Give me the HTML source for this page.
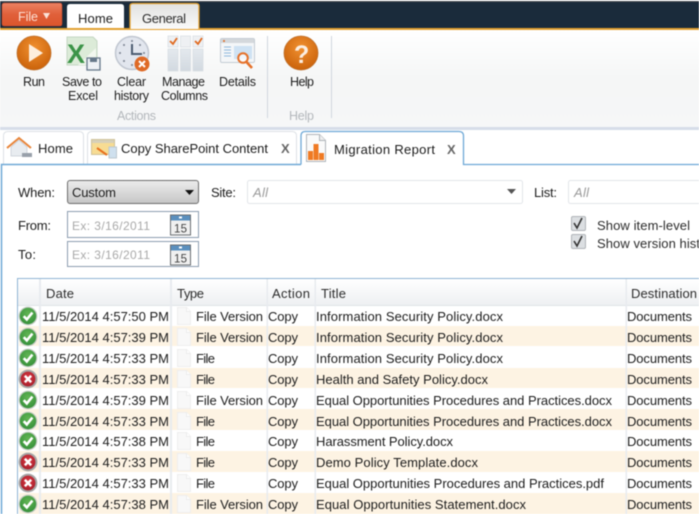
<!DOCTYPE html>
<html><head><meta charset="utf-8"><title>Migration Report</title>
<style>
html,body{margin:0;padding:0;width:699px;height:514px;overflow:hidden;background:#fff}
svg{display:block;filter:blur(.4px)}
text{font-family:"Liberation Sans",sans-serif;font-size:13px;fill:#1c1c1c}
.s{font-size:12.5px}
.g{fill:#a9a9a9;font-size:12px}
.h{fill:#2c2c2c}
</style></head><body>
<svg width="699" height="514" viewBox="0 0 699 514" xmlns="http://www.w3.org/2000/svg">
<defs>
<linearGradient id="rib" x1="0" y1="0" x2="0" y2="1"><stop offset="0" stop-color="#fff"/><stop offset=".5" stop-color="#f5f6f6"/><stop offset="1" stop-color="#f6f7f8"/></linearGradient>
<linearGradient id="file" x1="0" y1="0" x2="0" y2="1"><stop offset="0" stop-color="#ec8263"/><stop offset=".5" stop-color="#e0603a"/><stop offset="1" stop-color="#dc552c"/></linearGradient>
<linearGradient id="gen" x1="0" y1="0" x2="0" y2="1"><stop offset="0" stop-color="#e2e2e0"/><stop offset="1" stop-color="#fafafa"/></linearGradient>
<radialGradient id="org" cx=".5" cy=".35" r=".7"><stop offset="0" stop-color="#f09030"/><stop offset="1" stop-color="#c85f08"/></radialGradient>
<linearGradient id="dd" x1="0" y1="0" x2="0" y2="1"><stop offset="0" stop-color="#ececec"/><stop offset="1" stop-color="#c6c6c6"/></linearGradient>
<linearGradient id="hd" x1="0" y1="0" x2="0" y2="1"><stop offset="0" stop-color="#fff"/><stop offset="1" stop-color="#eef0f2"/></linearGradient>
<linearGradient id="col" x1="0" y1="0" x2="0" y2="1"><stop offset="0" stop-color="#e4e9ee"/><stop offset="1" stop-color="#d2d9e0"/></linearGradient>
<radialGradient id="grn" cx=".5" cy=".35" r=".7"><stop offset="0" stop-color="#62b554"/><stop offset="1" stop-color="#328e38"/></radialGradient>
<radialGradient id="red" cx=".5" cy=".4" r=".6"><stop offset="0" stop-color="#dc3a44"/><stop offset="1" stop-color="#a81e2a"/></radialGradient>
<g id="ok"><circle cx="0" cy="0" r="9.4" fill="#c3cbc3"/><circle cx="0" cy="0" r="8.2" fill="url(#grn)"/><path d="M-4.300 .2L-1.200 3.400L4.400-3.400" fill="none" stroke="#fff" stroke-width="2.600"/></g>
<g id="er"><circle cx="0" cy="0" r="9.4" fill="#a5a5a5"/><circle cx="0" cy="0" r="7.4" fill="url(#red)"/><path d="M-3.200-3.200L3.200 3.200M3.200-3.200L-3.200 3.200" stroke="#fff" stroke-width="2.500"/></g>
<g id="doc"><path d="M.5.5H9.500L13.500 4.500V17.500H.5Z" fill="#f8f8f8" stroke="#eeeeee"/><path d="M9.500.5V4.500H13.500" fill="#fff" stroke="#ececec"/></g>
<g id="cal"><rect x=".5" y=".5" width="20" height="20" fill="#f0f0f0" stroke="#6a6e72"/><rect x="1" y="1" width="19" height="5" fill="#5a8fbe"/><rect x="9" y="2" width="3" height="2" fill="#fff"/><text x="4" y="18" style="font-size:11.500px;fill:#444" textLength="13">15</text></g>
</defs>

<!-- Ribbon header -->
<rect width="699" height="1" fill="#fff"/>
<rect y="1" width="699" height="1" fill="#4a4f55"/>
<rect y="2" width="699" height="26" fill="#1a2b3b"/>
<rect y="28" width="699" height="2" fill="#e3a02f"/>
<rect y="30" width="699" height="97" fill="url(#rib)"/>
<rect y="127" width="699" height="3" fill="#d6dde9"/>

<rect x="2" y="3" width="60" height="23" rx="2" fill="url(#file)" stroke="#c8492a" stroke-width=".5"/>
<text x="18" y="21" textLength="20" style="font-size:12.500px;fill:#fde0d4">File</text>
<path d="M43 13H50L46.500 19Z" fill="#fbe2d8"/>

<path d="M67 28V7Q67 4 70 4H121Q124 4 124 7V28Z" fill="#fff"/>
<text x="78" y="23" textLength="35">Home</text>
<path d="M130 29V6Q130 3.500 133 3.500H196Q199 3.500 199 6V29" fill="url(#gen)" stroke="#e3a02f" stroke-width="1.300"/>
<text x="142" y="23" textLength="44" class="h">General</text>

<!-- Run -->
<circle cx="34" cy="53" r="17" fill="url(#org)" stroke="#bd6f2c" stroke-width=".8"/>
<path d="M29 44L43 53L29 62Z" fill="#fdeedd"/>
<!-- Excel -->
<path d="M67 37H93L97 41V65H67Z" fill="#dcebd8" stroke="#c4d6c2"/>
<path d="M78 65L96 48V65Z" fill="#f2f7ef"/>
<text x="67" y="63" style="font-size:27px;font-weight:bold;fill:#3c9448" textLength="21">X</text>
<rect x="87" y="58" width="13" height="12" fill="#eef2f6" stroke="#66788a" stroke-width="1.300"/>
<rect x="90" y="58" width="7" height="4" fill="#66788a"/>
<!-- Clock -->
<circle cx="132" cy="53" r="16.500" fill="#e2e6ee" stroke="#c0c6d0" stroke-width="1.500"/>
<g fill="#7a828e"><circle cx="132" cy="41" r="1"/><circle cx="120" cy="53" r="1"/><circle cx="144" cy="53" r="1"/><circle cx="132" cy="65" r="1"/><circle cx="124" cy="45" r="1"/><circle cx="140" cy="45" r="1"/><circle cx="124" cy="61" r="1"/></g>
<path d="M132 44V54H142" fill="none" stroke="#4c5c70" stroke-width="2"/>
<circle cx="142" cy="64" r="7.500" fill="#df6a26"/>
<path d="M139 61L145 67M145 61L139 67" stroke="#fff" stroke-width="2"/>
<!-- Manage columns -->
<g stroke="#d6dce2" stroke-width=".7">
<rect x="168" y="36" width="10" height="11" fill="#eef0f3"/><rect x="180.500" y="36" width="10" height="11" fill="#eef0f3"/><rect x="193" y="36" width="10" height="11" fill="#eef0f3"/>
<rect x="168" y="49" width="10" height="22" fill="url(#col)"/><rect x="180.500" y="49" width="10" height="22" fill="url(#col)"/><rect x="193" y="49" width="10" height="22" fill="url(#col)"/>
</g>
<path d="M170 41L173 44L177 38M195 41L198 44L202 38" fill="none" stroke="#e06a20" stroke-width="1.800"/>
<!-- Details -->
<rect x="220.500" y="38.500" width="34" height="24" rx="1.500" fill="#f4f6f8" stroke="#c4ccd4"/>
<rect x="221" y="39" width="33" height="4" fill="#d4d8dc"/>
<circle cx="224" cy="41" r="1" fill="#e06a20"/>
<path d="M224 47H231M224 50H231M224 53H231M224 56H231" stroke="#8fb8dc"/>
<rect x="234" y="46" width="18" height="13" fill="#cfe2f3"/>
<circle cx="243" cy="58" r="4.800" fill="#fff" fill-opacity=".7" stroke="#e5712a" stroke-width="2"/>
<path d="M246.500 62L252 68" stroke="#e5712a" stroke-width="2.600"/>
<!-- Help -->
<circle cx="301" cy="53" r="17" fill="url(#org)" stroke="#bd6f2c" stroke-width=".8"/>
<text x="294" y="63" style="font-size:25px;font-weight:bold;fill:#fbeee2" textLength="14">?</text>

<rect x="267" y="36" width="1" height="82" fill="#d0d6de"/>
<rect x="331" y="36" width="1" height="82" fill="#d0d6de"/>

<g class="l">
<text class="s" x="23" y="86" textLength="22">Run</text>
<text class="s" x="62" y="86" textLength="40">Save to</text>
<text class="s" x="68" y="100" textLength="30">Excel</text>
<text class="s" x="117" y="86" textLength="29">Clear</text>
<text class="s" x="114" y="100" textLength="35">history</text>
<text class="s" x="162" y="86" textLength="43">Manage</text>
<text class="s" x="161" y="100" textLength="47">Columns</text>
<text class="s" x="219" y="86" textLength="37">Details</text>
<text class="s" x="290" y="86" textLength="24">Help</text>
<text class="s" x="117" y="120" textLength="39" style="fill:#b3b7bb">Actions</text>
<text class="s" x="289" y="120" textLength="25" style="fill:#b3b7bb">Help</text>
</g>

<!-- Doc tabs -->
<path d="M3.500 164V136Q3.500 131.500 8 131.500H79Q83.500 131.500 83.500 136V164" fill="#fff" stroke="#dde1e6"/>
<path d="M87.500 164V136Q87.500 131.500 92 131.500H292Q296.500 131.500 296.500 136V164" fill="#fff" stroke="#dde1e6"/>
<path d="M1.500 514V164.500H301" fill="none" stroke="#6ea8d6" stroke-width="1.500"/>
<path d="M301 164.500V136Q301 131.500 305 131.500H459Q463.500 131.500 463.500 136V164.500H699" fill="#fff" stroke="#6ea8d6" stroke-width="1.300"/>

<!-- Home tab icon -->
<path d="M11 147V156H27V147L19 140Z" fill="#e8ecf0" stroke="#c4cad2" stroke-width=".7"/>
<path d="M7 148L19 138L31 148" fill="none" stroke="#e8853a" stroke-width="2"/>
<rect x="22" y="153" width="10" height="4" fill="#98a0aa"/>
<text x="38" y="153" textLength="35">Home</text>
<!-- Copy tab icon -->
<rect x="91.500" y="139.500" width="23" height="15" fill="#f7dc93" stroke="#d0c298"/>
<rect x="92" y="140" width="22" height="3" fill="#d6d0ba"/>
<rect x="109" y="147" width="7.500" height="11" fill="#cfe0ee" stroke="#bcc8d0"/>
<path d="M97 148L107 155" stroke="#e8701e" stroke-width="2"/>
<text x="121" y="153" textLength="147">Copy SharePoint Content</text>
<text x="281" y="153" textLength="9" style="font-weight:bold;fill:#666">X</text>
<!-- Report tab icon -->
<path d="M306.500 134.500H319.500L325.500 140.500V161.500H306.500Z" fill="#fafafa" stroke="#b0b5ba"/>
<path d="M319.500 134.500V140.500H325.500" fill="#eee" stroke="#b0b5ba"/>
<rect x="308" y="151" width="5" height="9" fill="#ef7a24"/><rect x="313.500" y="144" width="5" height="16" fill="#ef7a24"/><rect x="319" y="153" width="5" height="7" fill="#ef7a24"/>
<text x="334" y="154" textLength="101">Migration Report</text>
<text x="447" y="154" textLength="9" style="font-weight:bold;fill:#666">X</text>

<!-- Filters -->
<text x="18" y="197" textLength="37">When:</text>
<rect x="67.500" y="180.500" width="131" height="23" rx="2.500" fill="url(#dd)" stroke="#6c6c6c"/>
<text x="72" y="197" textLength="44">Custom</text>
<path d="M185 190H194L189.500 195Z" fill="#111"/>
<text x="211" y="197" textLength="25">Site:</text>
<rect x="247.500" y="180.500" width="275" height="23" rx="2" fill="#fff" stroke="#e2e5e9"/>
<text x="253" y="197" textLength="15" style="font-style:italic;fill:#9a9a9a">All</text>
<path d="M507 189H516L511.500 194Z" fill="#555"/>
<text x="534" y="197" textLength="23">List:</text>
<rect x="568.500" y="180.500" width="140" height="23" rx="2" fill="#fff" stroke="#e2e5e9"/>
<text x="574" y="197" textLength="15" style="font-style:italic;fill:#9a9a9a">All</text>

<text x="18" y="230" textLength="33">From:</text>
<rect x="67.500" y="211.500" width="131" height="26" fill="#fff" stroke="#8d9db0"/>
<text class="g" x="72" y="230" textLength="78">Ex: 3/16/2011</text>
<use href="#cal" x="170" y="214.500"/>
<text x="18" y="259" textLength="18">To:</text>
<rect x="67.500" y="241.500" width="131" height="25" fill="#fff" stroke="#8d9db0"/>
<text class="g" x="72" y="259" textLength="78">Ex: 3/16/2011</text>
<use href="#cal" x="170" y="244.500"/>

<g>
<rect x="571.500" y="216.500" width="14" height="14" rx="1.500" fill="#dcdfe2" stroke="#b0b4b8"/>
<path d="M574 223L577 228L582 218" fill="none" stroke="#333" stroke-width="1.600"/>
<rect x="571.500" y="234.500" width="14" height="14" rx="1.500" fill="#dcdfe2" stroke="#b0b4b8"/>
<path d="M574 241L577 246L582 236" fill="none" stroke="#333" stroke-width="1.600"/>
</g>
<text x="597" y="230" textLength="93" class="h">Show item-level</text>
<text x="597" y="248" textLength="103" class="h">Show version hist</text>

<!-- Grid -->
<rect x="17.500" y="278.500" width="700" height="250" fill="#fff" stroke="#8fb4d4"/>
<rect x="18" y="279" width="681" height="26" fill="url(#hd)"/>
<rect x="18" y="305" width="681" height="1" fill="#dfe3e7"/>

<g fill="#fdf3e3">
<rect x="19" y="326" width="680" height="20"/>
<rect x="19" y="368" width="680" height="20"/>
<rect x="19" y="409" width="680" height="21"/>
<rect x="19" y="451" width="680" height="21"/>
<rect x="19" y="493" width="680" height="21"/>
</g>
<g fill="#e8ebef">
<rect x="39" y="279" width="2" height="235"/>
<rect x="170" y="279" width="2" height="235"/>
<rect x="266.500" y="279" width="1.500" height="235"/>
<rect x="314.500" y="279" width="1.500" height="235"/>
<rect x="625.500" y="279" width="1.500" height="235"/>
</g>

<text x="46" y="298" textLength="28" class="h">Date</text>
<text x="177" y="298" textLength="27" class="h">Type</text>
<text x="272" y="298" textLength="38" class="h">Action</text>
<text x="321" y="298" textLength="25" class="h">Title</text>
<text x="631" y="298" textLength="66" class="h">Destination</text>

<!-- Rows -->
<use href="#ok" x="28" y="316"/><text x="42" y="321" textLength="127">11/5/2014 4:57:50 PM</text><use href="#doc" x="177" y="307"/><text x="196" y="321" textLength="67">File Version</text><text x="268" y="321" textLength="30">Copy</text><text x="316" y="321" textLength="187">Information Security Policy.docx</text><text x="627" y="321" textLength="65">Documents</text>
<use href="#ok" x="28" y="337"/><text x="42" y="342" textLength="127">11/5/2014 4:57:39 PM</text><use href="#doc" x="177" y="328"/><text x="196" y="342" textLength="67">File Version</text><text x="268" y="342" textLength="30">Copy</text><text x="316" y="342" textLength="187">Information Security Policy.docx</text><text x="627" y="342" textLength="65">Documents</text>
<use href="#ok" x="28" y="358"/><text x="42" y="363" textLength="127">11/5/2014 4:57:33 PM</text><use href="#doc" x="177" y="349"/><text x="196" y="363" textLength="19">File</text><text x="268" y="363" textLength="30">Copy</text><text x="316" y="363" textLength="187">Information Security Policy.docx</text><text x="627" y="363" textLength="65">Documents</text>
<use href="#er" x="28" y="379"/><text x="42" y="384" textLength="127">11/5/2014 4:57:33 PM</text><use href="#doc" x="177" y="370"/><text x="196" y="384" textLength="19">File</text><text x="268" y="384" textLength="30">Copy</text><text x="316" y="384" textLength="172">Health and Safety Policy.docx</text><text x="627" y="384" textLength="65">Documents</text>
<use href="#ok" x="28" y="400"/><text x="42" y="405" textLength="127">11/5/2014 4:57:39 PM</text><use href="#doc" x="177" y="391"/><text x="196" y="405" textLength="67">File Version</text><text x="268" y="405" textLength="30">Copy</text><text x="316" y="405" textLength="296">Equal Opportunities Procedures and Practices.docx</text><text x="627" y="405" textLength="65">Documents</text>
<use href="#ok" x="28" y="421"/><text x="42" y="426" textLength="127">11/5/2014 4:57:33 PM</text><use href="#doc" x="177" y="412"/><text x="196" y="426" textLength="19">File</text><text x="268" y="426" textLength="30">Copy</text><text x="316" y="426" textLength="296">Equal Opportunities Procedures and Practices.docx</text><text x="627" y="426" textLength="65">Documents</text>
<use href="#ok" x="28" y="441"/><text x="42" y="446" textLength="127">11/5/2014 4:57:38 PM</text><use href="#doc" x="177" y="432"/><text x="196" y="446" textLength="19">File</text><text x="268" y="446" textLength="30">Copy</text><text x="316" y="446" textLength="137">Harassment Policy.docx</text><text x="627" y="446" textLength="65">Documents</text>
<use href="#er" x="28" y="462"/><text x="42" y="467" textLength="127">11/5/2014 4:57:33 PM</text><use href="#doc" x="177" y="453"/><text x="196" y="467" textLength="19">File</text><text x="268" y="467" textLength="30">Copy</text><text x="316" y="467" textLength="162">Demo Policy Template.docx</text><text x="627" y="467" textLength="65">Documents</text>
<use href="#er" x="28" y="483"/><text x="42" y="488" textLength="127">11/5/2014 4:57:33 PM</text><use href="#doc" x="177" y="474"/><text x="196" y="488" textLength="19">File</text><text x="268" y="488" textLength="30">Copy</text><text x="316" y="488" textLength="288">Equal Opportunities Procedures and Practices.pdf</text><text x="627" y="488" textLength="65">Documents</text>
<use href="#ok" x="28" y="504"/><text x="42" y="509" textLength="127">11/5/2014 4:57:38 PM</text><use href="#doc" x="177" y="495"/><text x="196" y="509" textLength="67">File Version</text><text x="268" y="509" textLength="30">Copy</text><text x="316" y="509" textLength="210">Equal Opportunities Statement.docx</text><text x="627" y="509" textLength="65">Documents</text>
</svg>
</body></html>
